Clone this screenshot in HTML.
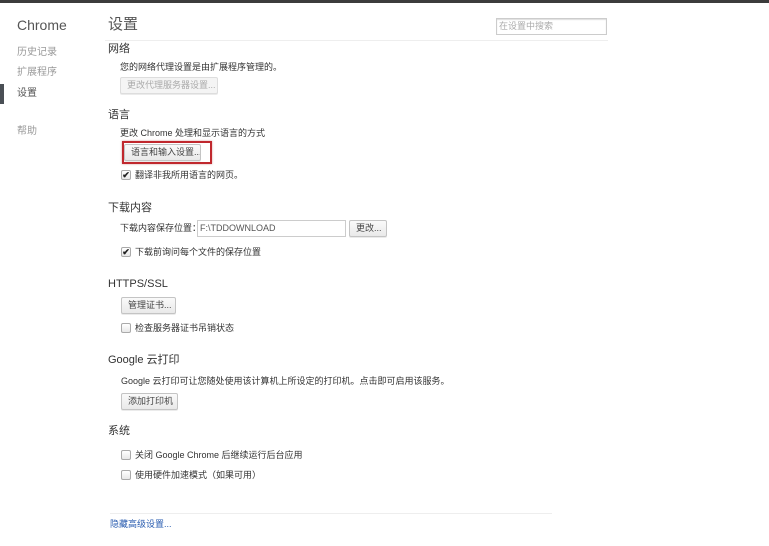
<!DOCTYPE html>
<html><head><meta charset="utf-8"><style>
*{margin:0;padding:0;box-sizing:border-box}
body{width:769px;height:546px;background:#fff;position:relative;overflow:hidden;font-family:"Liberation Sans","Noto Sans CJK SC",sans-serif;color:#333;font-size:9px}
.a{position:absolute;white-space:nowrap;line-height:12px}
.h{font-size:11px;color:#333;line-height:14px}
.btn{position:absolute;white-space:nowrap;overflow:hidden;border:1px solid #c4c4c4;border-radius:2px;background:linear-gradient(#fafafa,#e9e9e9);font-size:9px;color:#444;line-height:15px;padding-left:6px;box-shadow:0 1px 0 rgba(0,0,0,.08)}
.cb{position:absolute;width:10px;height:10px;border:1px solid #aaa;border-radius:2px;background:linear-gradient(#fff,#e8e8e8)}
.ck{font-size:9px;color:#222;line-height:9px;text-align:center;font-weight:bold}
.side{color:#999;font-size:10px}
</style></head><body>
<div style="position:absolute;left:0;top:0;width:769px;height:3px;background:#3c3c3c"></div>
<div style="position:absolute;left:0;top:84px;width:4px;height:20px;background:#4a4f55"></div>
<div class="a" style="left:17px;top:17px;font-size:14px;line-height:16px;color:#555">Chrome</div>
<div class="a side" style="left:17px;top:47px">历史记录</div>
<div class="a side" style="left:17px;top:67px">扩展程序</div>
<div class="a side" style="left:17px;top:88px;color:#555">设置</div>
<div class="a side" style="left:17px;top:126px">帮助</div>
<div class="a" style="left:108px;top:16px;font-size:15px;line-height:18px;color:#555">设置</div>
<div style="position:absolute;left:496px;top:18px;width:111px;height:17px;border:1px solid #ccc;box-shadow:inset 0 1px 1px #ddd"></div>
<div class="a" style="left:499px;top:20px;color:#aaa">在设置中搜索</div>
<div style="position:absolute;left:105px;top:40px;width:503px;height:1px;background:#eee"></div>

<div class="a h" style="left:108px;top:42px">网络</div>
<div class="a" style="left:120px;top:61px">您的网络代理设置是由扩展程序管理的。</div>
<div class="btn" style="left:120px;top:77px;width:98px;height:17px;color:#aaa;border-color:#ddd;background:#f4f4f4">更改代理服务器设置...</div>

<div class="a h" style="left:108px;top:108px">语言</div>
<div class="a" style="left:120px;top:127px">更改 Chrome 处理和显示语言的方式</div>
<div style="position:absolute;left:122px;top:141px;width:90px;height:23px;border:2px solid #c0282e;box-shadow:0 0 2px rgba(150,0,0,.4)"></div>
<div class="btn" style="left:124px;top:144px;width:77px;height:17px">语言和输入设置...</div>
<div class="cb ck" style="left:121px;top:170px">✔</div>
<div class="a" style="left:135px;top:169px">翻译非我所用语言的网页。</div>

<div class="a h" style="left:108px;top:201px">下载内容</div>
<div class="a" style="left:120px;top:222px">下载内容保存位置：</div>
<div style="position:absolute;left:197px;top:220px;width:149px;height:17px;border:1px solid #ccc"></div>
<div class="a" style="left:200px;top:222px;color:#555">F:\TDDOWNLOAD</div>
<div class="btn" style="left:349px;top:220px;width:38px;height:17px">更改...</div>
<div class="cb ck" style="left:121px;top:247px">✔</div>
<div class="a" style="left:135px;top:246px">下载前询问每个文件的保存位置</div>

<div class="a h" style="left:108px;top:277px">HTTPS/SSL</div>
<div class="btn" style="left:121px;top:297px;width:55px;height:17px">管理证书...</div>
<div class="cb" style="left:121px;top:323px"></div>
<div class="a" style="left:135px;top:322px">检查服务器证书吊销状态</div>

<div class="a h" style="left:108px;top:353px">Google 云打印</div>
<div class="a" style="left:121px;top:375px">Google 云打印可让您随处使用该计算机上所设定的打印机。点击即可启用该服务。</div>
<div class="btn" style="left:121px;top:393px;width:57px;height:17px">添加打印机</div>

<div class="a h" style="left:108px;top:424px">系统</div>
<div class="cb" style="left:121px;top:450px"></div>
<div class="a" style="left:135px;top:449px">关闭 Google Chrome 后继续运行后台应用</div>
<div class="cb" style="left:121px;top:470px"></div>
<div class="a" style="left:135px;top:469px">使用硬件加速模式（如果可用）</div>

<div style="position:absolute;left:110px;top:513px;width:442px;height:1px;background:#eee"></div>
<div class="a" style="left:110px;top:518px;color:#2a5db0">隐藏高级设置...</div>
</body></html>
